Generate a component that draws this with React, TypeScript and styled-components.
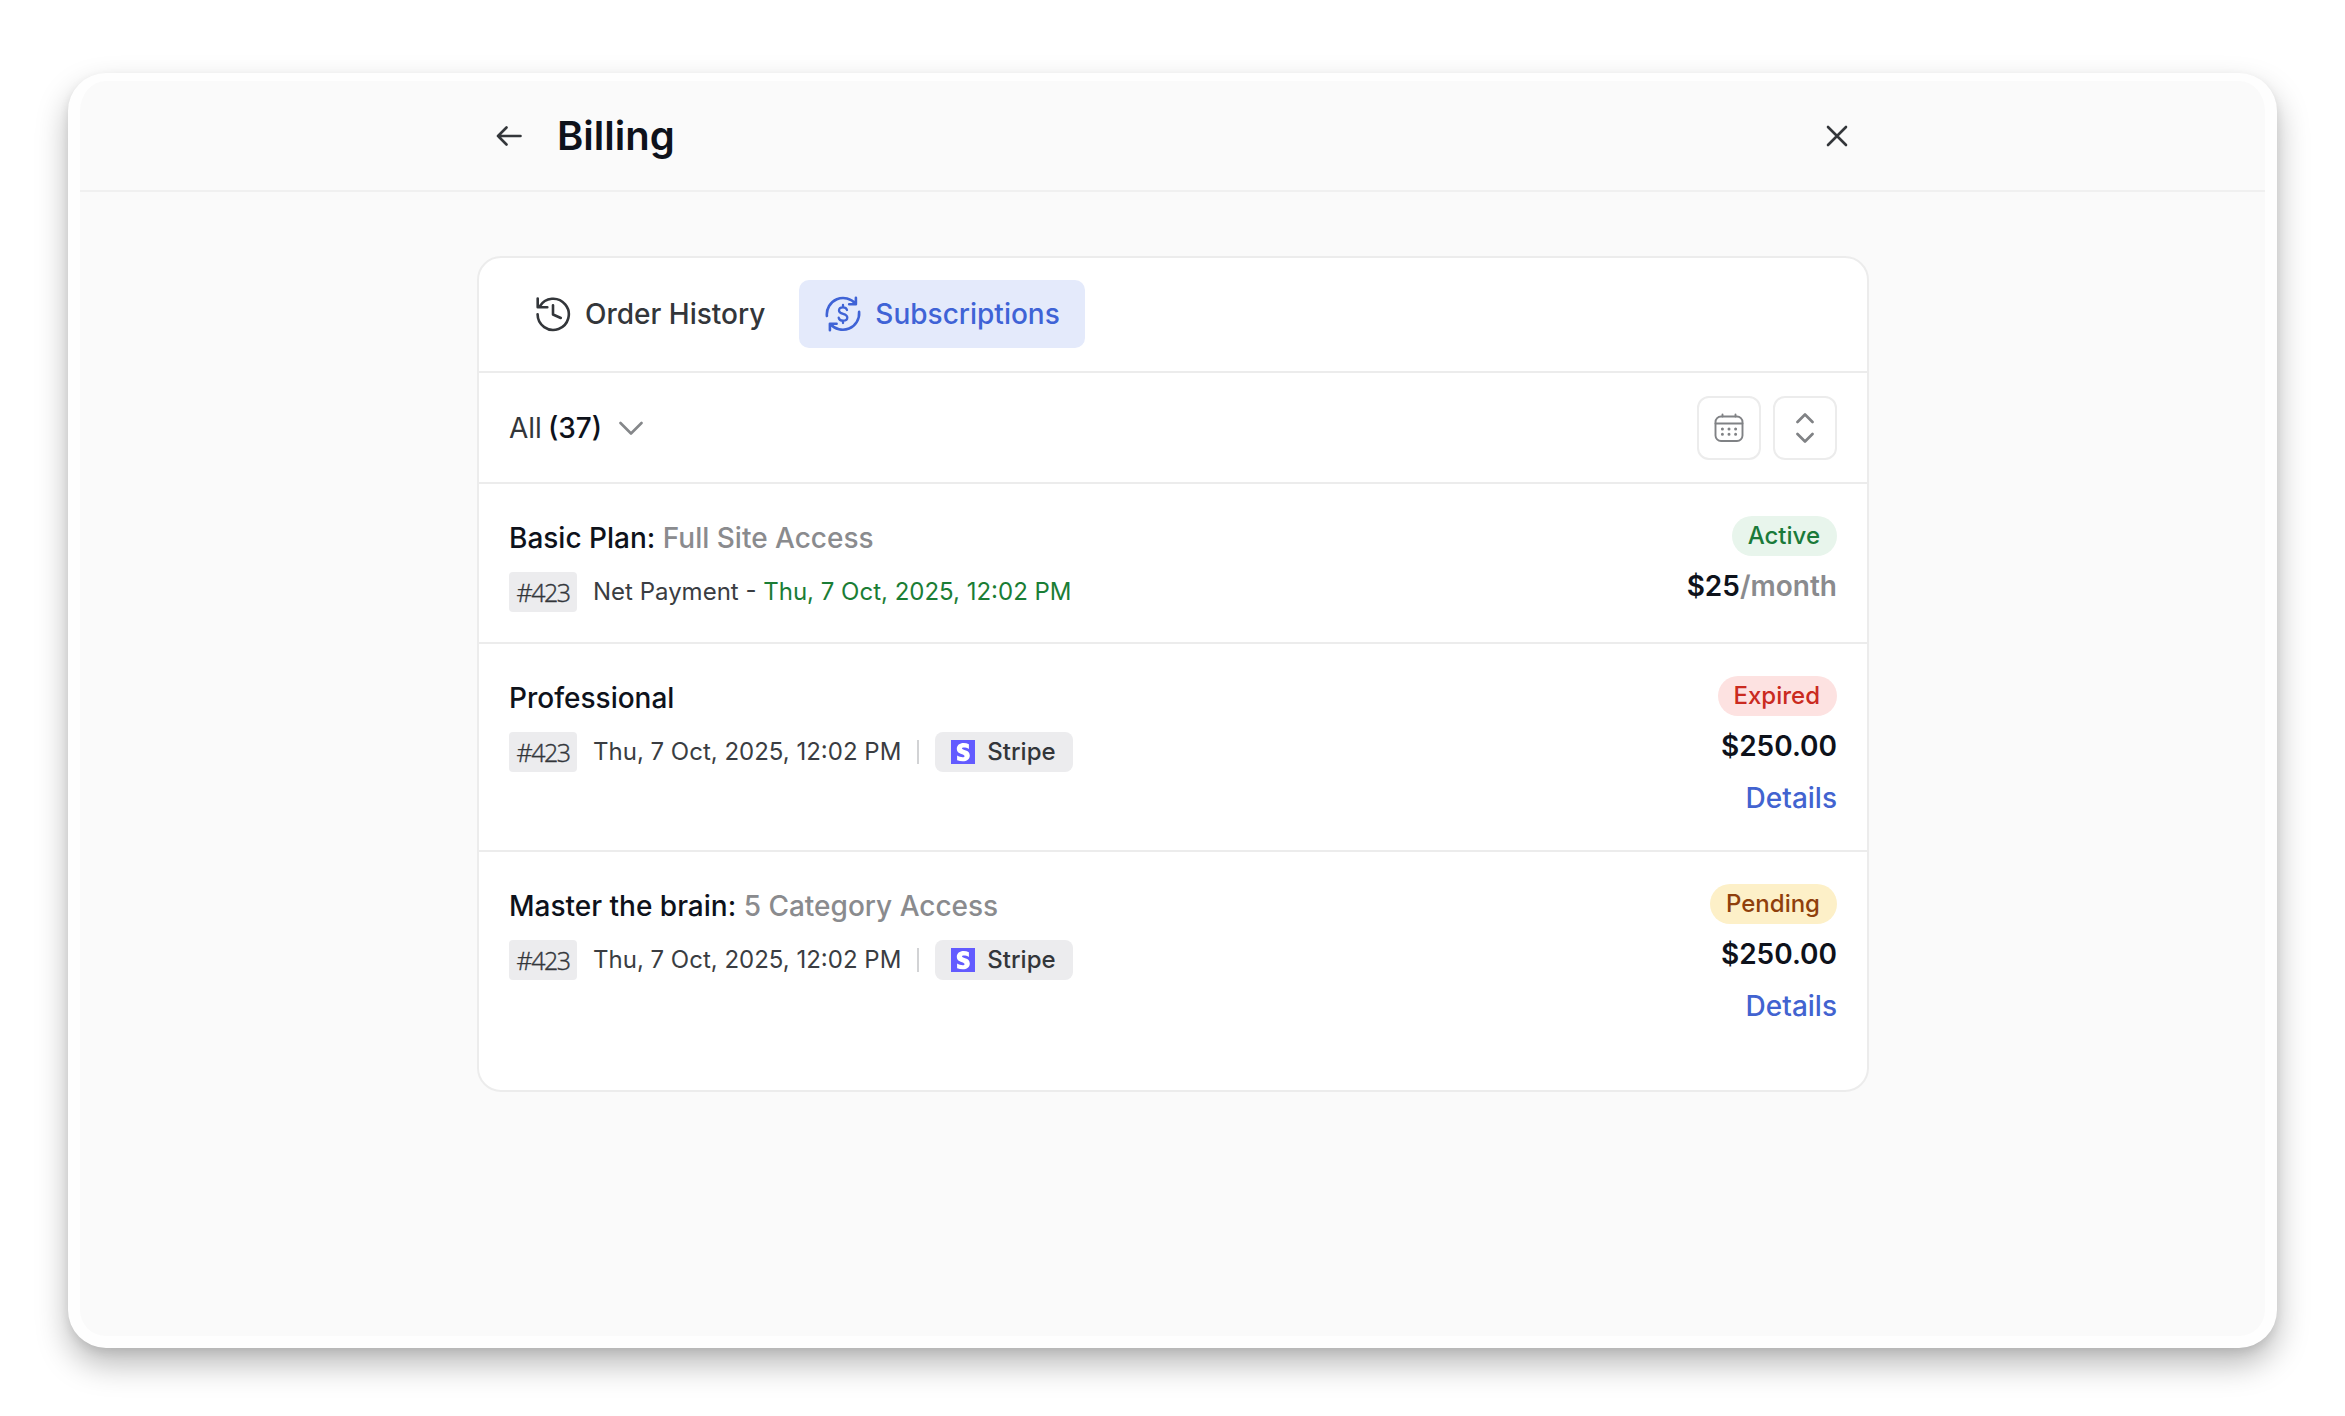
import React from "react";
import styled, { createGlobalStyle, css } from "styled-components";

const Global = createGlobalStyle`
  *, *::before, *::after { box-sizing: border-box; }
  body { margin: 0; background: #fff; font-family: Inter, "Liberation Sans", sans-serif; }
  button { font: inherit; color: inherit; border: 0; background: none; padding: 0; margin: 0; }
`;

const Page = styled.div`
  height: 1416px;
  padding: 73px 68px 68px;
  background: #fff;
`;

const Window = styled.div`
  height: 1275px;
  border: solid #fefefe;
  border-width: 8px 12px 12px;
  border-radius: 38px;
  background: #fafafa;
  box-shadow: 0 16px 32px rgba(0, 0, 0, 0.28), 0 4px 10px rgba(0, 0, 0, 0.08);
`;

const Header = styled.header`
  height: 111px;
  border-bottom: 2px solid #f0f0f0;
  display: flex;
  justify-content: center;
`;

const HeaderInner = styled.div`
  width: 1352px;
  margin-right: 1px;
  display: flex;
  align-items: center;
`;

const IconButton = styled.button`
  display: flex;
  color: #33363a;
`;

const Title = styled.h1`
  margin: 0 auto 0 35px;
  font-size: 40px;
  line-height: 48px;
  font-weight: 600;
  color: #0e121b;
`;

const Main = styled.main`
  padding: 64px 0 0 1px;
  display: flex;
  justify-content: center;
`;

const Card = styled.section`
  width: 1392px;
  height: 836px;
  border: 2px solid #ececec;
  border-radius: 24px;
  background: #fff;
`;

const Tabs = styled.nav`
  height: 115px;
  padding: 0 30px 1px;
  display: flex;
  align-items: center;
  gap: 8px;
  border-bottom: 2px solid #ececec;
`;

const Tab = styled.button<{ $active?: boolean }>`
  height: 68px;
  padding: 0 26px;
  display: flex;
  align-items: center;
  gap: 14px;
  border-radius: 10px;
  font-size: 28px;
  font-weight: 500;
  color: #33363a;
  ${(p) =>
    p.$active &&
    css`
      padding-right: 25px;
      background: #e4eafb;
      color: #3f63d6;
    `}
`;

const Toolbar = styled.div`
  height: 111px;
  padding: 0 30px;
  display: flex;
  align-items: center;
  justify-content: space-between;
  border-bottom: 2px solid #ececec;
`;

const Filter = styled.button`
  display: flex;
  align-items: center;
  font-size: 28px;
  color: #33363a;
`;

const Count = styled.b`
  margin: 0 17px 0 6px;
  font-weight: 500;
  color: #0e121b;
`;

const Tools = styled.div`
  display: flex;
  gap: 12px;
`;

const ToolButton = styled.button`
  width: 64px;
  height: 64px;
  display: grid;
  place-items: center;
  border: 2px solid #ececec;
  border-radius: 12px;
  color: #808285;
`;

const Row = styled.article<{ $height: number }>`
  height: ${(p) => p.$height}px;
  padding: 32px 30px 0;
  display: flex;
  justify-content: space-between;
  border-bottom: 2px solid #ececec;
  &:last-child { border-bottom: 0; }
`;

const Info = styled.div`
  padding-top: 4px;
`;

const Plan = styled.h2`
  margin: 0 0 16px;
  font-size: 28px;
  line-height: 36px;
  font-weight: 500;
  color: #0e121b;
`;

const Muted = styled.span`
  color: #8a8b8e;
`;

const Meta = styled.div`
  height: 40px;
  display: flex;
  align-items: center;
  font-size: 24px;
  line-height: 40px;
  color: #3a3d42;
`;

const OrderId = styled.span`
  width: 68px;
  height: 40px;
  margin-right: 16px;
  border-radius: 4px;
  background: #ececee;
  text-align: center;
  font-family: "Open Sans", sans-serif;
  font-size: 25px;
  font-weight: 300;
  letter-spacing: -1.5px;
  color: #33363a;
  -webkit-text-stroke: 0.4px #33363a;
`;

const NextDate = styled.span`
  color: #1a7d35;
`;

const Separator = styled.i`
  width: 2px;
  height: 24px;
  margin: 0 16px;
  background: #d2d3d5;
`;

const Gateway = styled.span`
  height: 40px;
  padding: 0 17px 0 16px;
  display: flex;
  align-items: center;
  gap: 12px;
  border-radius: 8px;
  background: #ececee;
  font-weight: 500;
  color: #33363a;
`;

const Side = styled.div`
  display: flex;
  flex-direction: column;
  align-items: flex-end;
`;

const tones = {
  Active: ["#e8f5ec", "#1a7a3a"],
  Expired: ["#fde2e1", "#ca2a20"],
  Pending: ["#fdf0c8", "#8f3f0c"],
};

const Badge = styled.span<{ $tone: keyof typeof tones }>`
  height: 40px;
  padding: 0 17px 0 16px;
  border-radius: 20px;
  font-size: 24px;
  line-height: 39px;
  font-weight: 500;
  background: ${(p) => tones[p.$tone][0]};
  color: ${(p) => tones[p.$tone][1]};
`;

const Price = styled.div`
  margin-top: 12px;
  font-size: 28px;
  line-height: 36px;
  font-weight: 600;
  color: #0e121b;
`;

const Details = styled.a`
  margin-top: 16px;
  font-size: 28px;
  line-height: 36px;
  font-weight: 500;
  color: #4263d0;
`;

const stroke = {
  fill: "none",
  stroke: "currentColor",
  strokeLinecap: "round" as const,
  strokeLinejoin: "round" as const,
};

const ArrowLeft = () => (
  <svg width="26" height="26" viewBox="0 0 26 26" {...stroke} strokeWidth="2.6">
    <path d="M24.500 13H2M10.500 4.500L2 13l8.500 8.500" />
  </svg>
);

const Close = () => (
  <svg width="22" height="22" viewBox="0 0 22 22" {...stroke} strokeWidth="2.6">
    <path d="M2 2l18 18M20 2L2 20" />
  </svg>
);

const History = () => (
  <svg width="36" height="36" viewBox="0 0 36 36" {...stroke} strokeWidth="2.6">
    <path d="M2.600 18.300A15.600 15.600 0 1 0 4.700 10.500" />
    <path d="M2.700 2.500v8.800h9.600M18 9.300v9.200l7.800 3.500" />
  </svg>
);

const Renew = () => (
  <svg width="36" height="36" viewBox="0 0 36 36" {...stroke} strokeWidth="2.6">
    <path d="M1.900 20A16.300 16.300 0 0 1 30.700 8M30.900 1.700v6.500h-6.700" />
    <path d="M34.100 15.900A16.300 16.300 0 0 1 5.300 27.800M4.900 34.200v-6.500h6.700" />
    <path d="M22 14c-.5-1.800-2-2.600-4-2.600-2.300 0-4 1.200-4 3.100 0 4.500 8.300 2.400 8.300 7 0 2-1.800 3.200-4.200 3.200-2.300 0-4-1-4.400-3M18 9v2.400M18 24.700V27" strokeWidth="2.300" />
  </svg>
);

const ChevronDown = () => (
  <svg width="24" height="16" viewBox="0 0 24 16" {...stroke} stroke="#85878a" strokeWidth="2.600">
    <path d="M1.500 3L12 13.500 22.500 3" />
  </svg>
);

const Calendar = () => (
  <svg width="30" height="30" viewBox="0 0 30 30" {...stroke} strokeWidth="1.900">
    <rect x="1.500" y="3.500" width="27" height="24.500" rx="5.500" />
    <path d="M1.500 10.500h27M8.500 1.500v2M21.500 1.500v2" />
    <path d="M8.400 16h.01M15 16h.01M21.600 16h.01M8.400 21.300h.01M15 21.300h.01M21.600 21.300h.01" strokeWidth="3" />
  </svg>
);

const Sort = () => (
  <svg width="18" height="32" viewBox="0 0 18 32" {...stroke} strokeWidth="2.700">
    <path d="M1.500 10L9 2.500l7.500 7.500M1.500 22L9 29.500l7.500-7.500" />
  </svg>
);

const StripeLogo = () => (
  <svg width="24" height="24" viewBox="0 0 24 24">
    <path fill="#635bff" d="M0 0h24v24H0z" />
    <path
      fill="#fff"
      d="M11 8.600c0-.8.700-1.100 1.700-1.100 1.700 0 3.700.5 5.200 1.400V4.300C16.200 3.500 14.500 3 12.700 3 8.600 3 5.800 5.200 5.800 8.900c0 5.700 7.800 4.700 7.800 7.200 0 .9-.8 1.200-1.900 1.200-1.700 0-3.900-.7-5.600-1.700v4.600c1.900.8 3.800 1.100 5.600 1.100 4.200 0 7.100-2 7.100-5.800C18.800 9.500 11 10.600 11 8.600z"
    />
  </svg>
);

const StripeMeta = () => (
  <>
    <span>Thu, 7 Oct, 2025, 12:02 PM</span>
    <Separator />
    <Gateway>
      <StripeLogo />
      Stripe
    </Gateway>
  </>
);

type SubscriptionProps = {
  height: number;
  name: string;
  access?: string;
  status: keyof typeof tones;
  price: string;
  period?: string;
  details?: boolean;
  children: React.ReactNode;
};

const Subscription = ({ height, name, access, status, price, period, details, children }: SubscriptionProps) => (
  <Row $height={height}>
    <Info>
      <Plan>
        {name} {access && <Muted>{access}</Muted>}
      </Plan>
      <Meta>
        <OrderId>#423</OrderId>
        {children}
      </Meta>
    </Info>
    <Side>
      <Badge $tone={status}>{status}</Badge>
      <Price>
        {price}
        {period && <Muted>{period}</Muted>}
      </Price>
      {details && <Details>Details</Details>}
    </Side>
  </Row>
);

export default function App() {
  return (
    <Page>
      <Global />
      <Window>
        <Header>
          <HeaderInner>
            <IconButton aria-label="Back">
              <ArrowLeft />
            </IconButton>
            <Title>Billing</Title>
            <IconButton aria-label="Close">
              <Close />
            </IconButton>
          </HeaderInner>
        </Header>
        <Main>
          <Card>
            <Tabs>
              <Tab>
                <History />
                Order History
              </Tab>
              <Tab $active>
                <Renew />
                Subscriptions
              </Tab>
            </Tabs>
            <Toolbar>
              <Filter>
                All <Count>(37)</Count>
                <ChevronDown />
              </Filter>
              <Tools>
                <ToolButton aria-label="Date">
                  <Calendar />
                </ToolButton>
                <ToolButton aria-label="Sort">
                  <Sort />
                </ToolButton>
              </Tools>
            </Toolbar>
            <Subscription height={160} name="Basic Plan:" access="Full Site Access" status="Active" price="$25" period="/month">
              <span>
                Net Payment - <NextDate>Thu, 7 Oct, 2025, 12:02 PM</NextDate>
              </span>
            </Subscription>
            <Subscription height={208} name="Professional" status="Expired" price="$250.00" details>
              <StripeMeta />
            </Subscription>
            <Subscription height={238} name="Master the brain:" access="5 Category Access" status="Pending" price="$250.00" details>
              <StripeMeta />
            </Subscription>
          </Card>
        </Main>
      </Window>
    </Page>
  );
}
